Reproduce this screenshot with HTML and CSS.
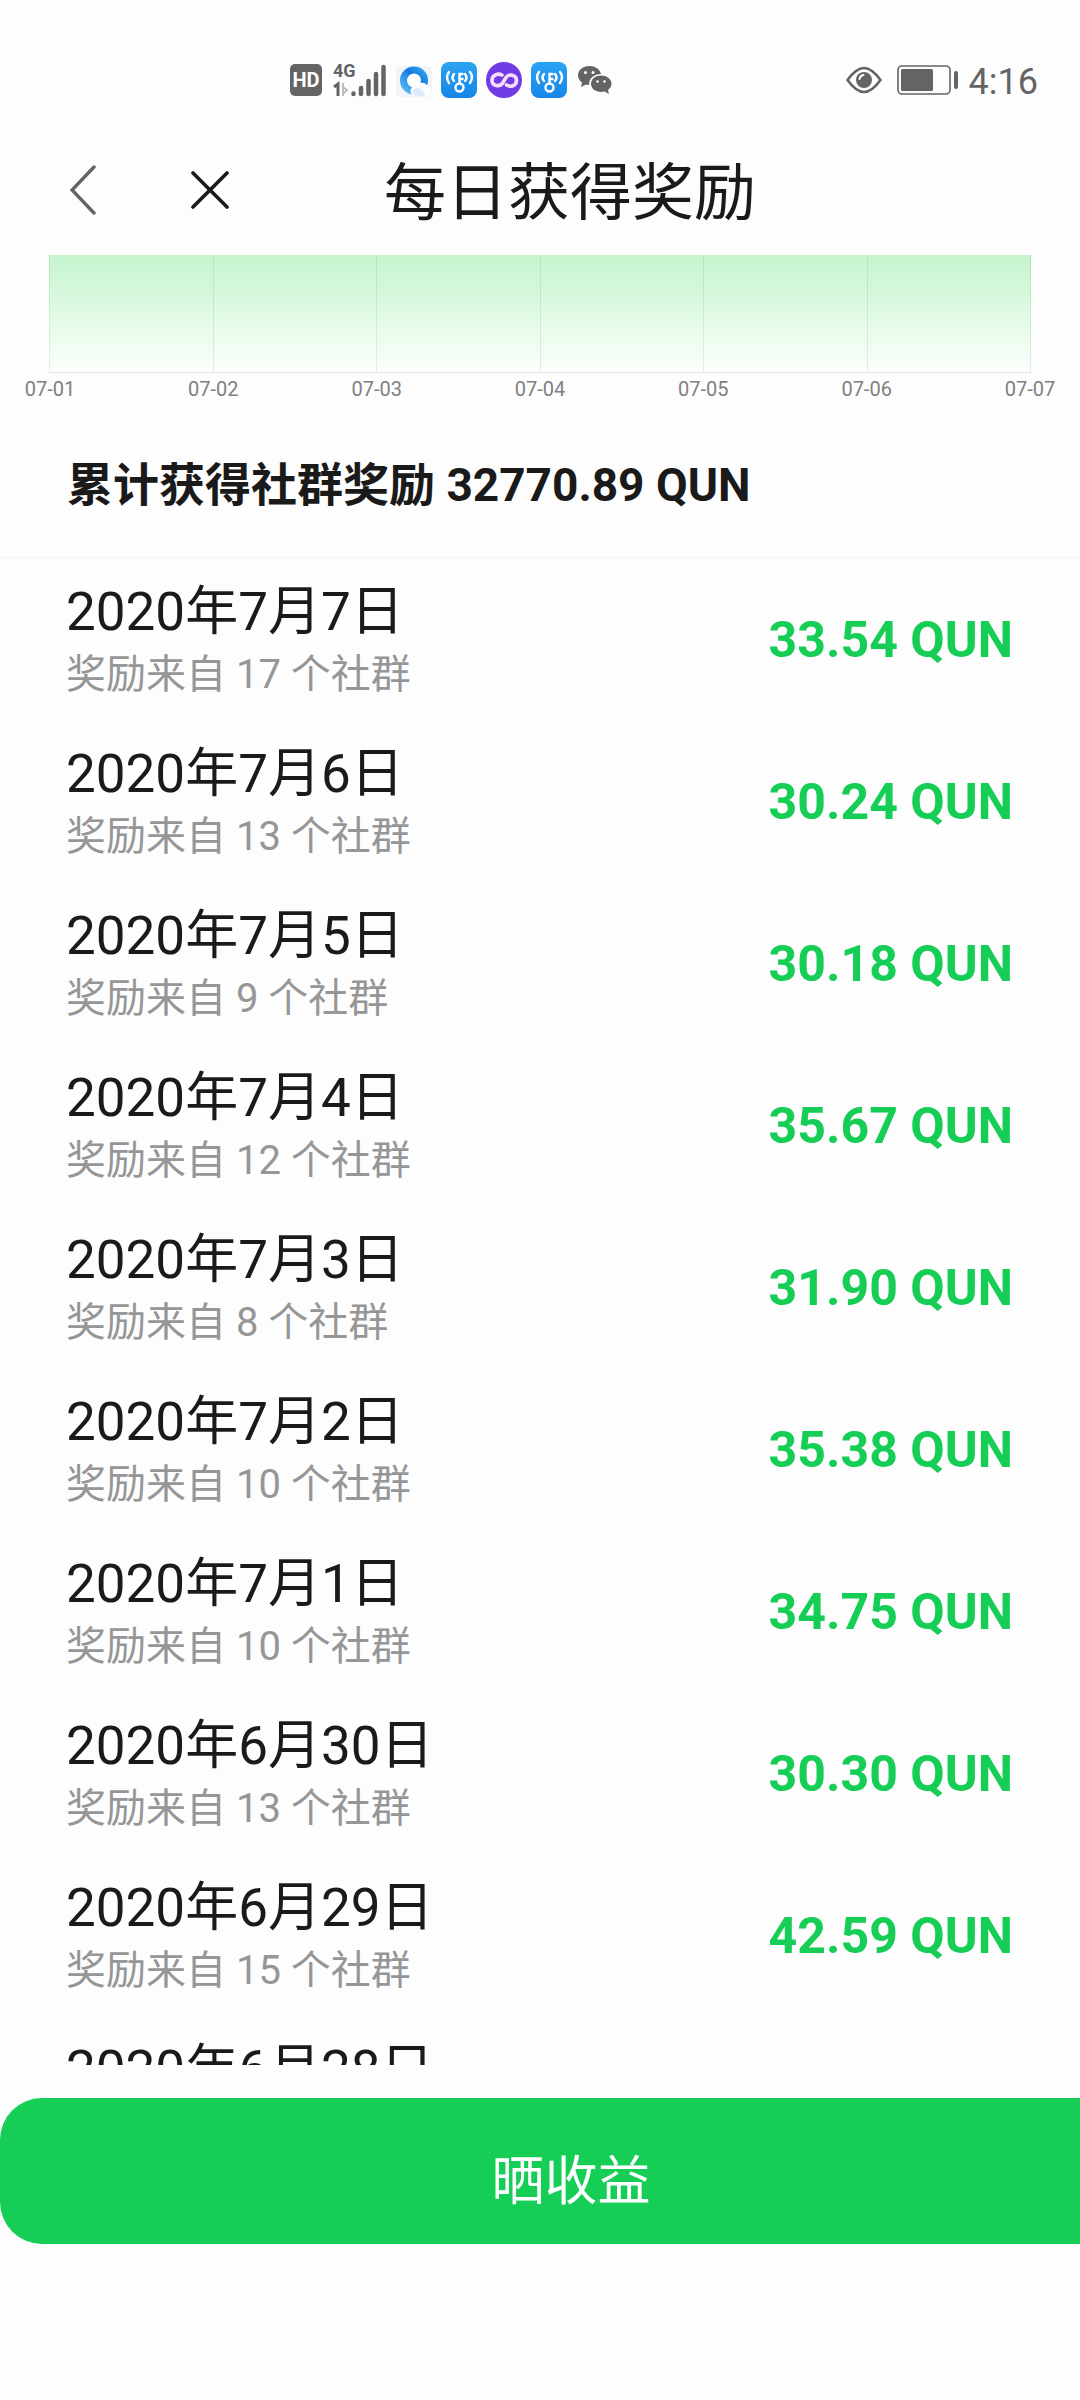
FILE: index.html
```html
<!DOCTYPE html>
<html lang="zh-CN">
<head>
<meta charset="utf-8">
<meta name="viewport" content="width=device-width, initial-scale=1">
<title>每日获得奖励</title>
<link rel="stylesheet" href="styles.css">
</head>
<body>
<div class="app">
  <div class="status">
    <div class="status-left">
      <span class="hd">HD</span>
      <svg class="signal" width="54" height="40" viewBox="0 0 54 40" aria-hidden="true">
        <text class="signal-net" x="0" y="17">4G</text>
        <path d="M1 27 5 24V36" fill="none" stroke="#646464" stroke-width="3"/>
        <path d="M10 23V36M10 27l4 3-4 4" fill="none" stroke="#bdbdbd" stroke-width="2"/>
        <path d="M20.500 33.500v.5M28 28v6M35.500 21v13M43 14v20M50.500 7v27" fill="none" stroke="#646464" stroke-width="4.500" stroke-linecap="round"/>
      </svg>
      <svg class="browser" width="36" height="36" viewBox="0 0 36 36" aria-hidden="true">
        <defs><linearGradient id="ring" x1="0" y1="1" x2="1" y2="0"><stop offset="0" stop-color="#55bdf5"/><stop offset=".6" stop-color="#1677e0"/><stop offset="1" stop-color="#2ba4ee"/></linearGradient></defs>
        <rect y="4" width="36" height="31" rx="5" fill="#f1f4f8"/>
        <circle cx="18" cy="18.500" r="10.500" fill="#fff" stroke="url(#ring)" stroke-width="7"/>
        <path d="M19 34a5 5 0 0 1 1-10 7 7 0 0 1 11-1 6 6 0 0 1 1 11Z" fill="#fff"/>
        <path d="M19 34a4.500 4.500 0 0 1 1-8c5 0 8 3 9 8Z" fill="#dceafa"/>
      </svg>
      <svg class="app-icon" width="36" height="36" viewBox="0 0 36 36" aria-hidden="true">
        <defs>
          <linearGradient id="sky" x1="0" y1="0" x2="0" y2="1"><stop offset="0" stop-color="#2ba3f2"/><stop offset="1" stop-color="#1686e8"/></linearGradient>
          <g id="wifi-key">
            <rect width="36" height="36" rx="8" fill="url(#sky)"/>
            <g fill="none" stroke="#fff" stroke-width="2.400" stroke-linecap="round">
              <path d="M8 10q-4 5 0 11M13 12q-3 4 0 7M29 10q4 5 0 11M24 12q3 4 0 7"/>
              <circle cx="18.500" cy="25.500" r="4"/><path d="M18.500 21V12h3M18.500 17h3"/>
            </g>
          </g>
        </defs>
        <use href="#wifi-key"/>
      </svg>
      <svg class="app-icon" width="36" height="36" viewBox="0 0 36 36" aria-hidden="true">
        <circle cx="18" cy="18" r="18" fill="#6f3be4"/>
        <path d="M16 13c-4-2-10 0-10 5.500s8 7 11 2l3-5c3-4.500 10.500-2.500 10.500 3s-6 7-10 4.500" fill="none" stroke="#fbdcf6" stroke-width="3.600" stroke-linecap="round"/>
      </svg>
      <svg class="app-icon" width="36" height="36" viewBox="0 0 36 36" aria-hidden="true"><use href="#wifi-key"/></svg>
      <svg class="chat" width="34" height="30" viewBox="0 0 34 30" aria-hidden="true">
        <path d="M11.500 1C5 1 0 5 0 10.500c0 3 2 5.500 4 7L3 22l5-2.500c1.500.4 2 .5 3 .5C11 13 16 9 23 9 22 4 17 1 11.500 1Z" fill="#646464"/>
        <path d="M23 10.500c-5.500 0-10 3.500-10 8.300S17.500 27 23 27c1.300 0 2.500-.2 3.600-.5L31 29l-1-4c2-1.500 3.500-3.700 3.500-6.200 0-4.800-5-8.300-10.500-8.300Z" fill="#646464"/>
        <g fill="#fff"><circle cx="7.500" cy="7.500" r="1.500"/><circle cx="15" cy="7.500" r="1.500"/><circle cx="19.500" cy="16.500" r="1.300"/><circle cx="26.500" cy="16.500" r="1.300"/></g>
      </svg>
    </div>
    <div class="status-right">
      <svg class="eye" width="36" height="28" viewBox="0 0 36 28" aria-hidden="true">
        <path d="M1.500 14C8 5 13 2 18 2s10 3 16.500 12C28 23 23 26 18 26S8 23 1.500 14Z" fill="none" stroke="#646464" stroke-width="2.600" stroke-linejoin="round"/>
        <circle cx="18" cy="14" r="8" fill="#646464"/><path d="M13.500 13a5 5 0 0 1 4-4" fill="none" stroke="#fff" stroke-width="2" stroke-linecap="round"/>
      </svg>
      <svg class="battery" width="62" height="30" viewBox="0 0 62 30" aria-hidden="true">
        <rect x="1" y="1" width="52" height="28" rx="4" fill="none" stroke="#646464" stroke-width="1.600"/>
        <rect x="4" y="4" width="32" height="22" rx="1.500" fill="#646464"/><rect x="57" y="6" width="4" height="18" rx="2" fill="#646464"/>
      </svg>
      <time class="clock">4:16</time>
    </div>
  </div>

  <header class="nav">
    <button class="nav-btn" aria-label="返回"><svg width="26" height="50" viewBox="0 0 26 50"><path d="M24 2 2 25l22 23" fill="none" stroke="#646464" stroke-width="3.400" stroke-linecap="round"/></svg></button>
    <button class="nav-btn close" aria-label="关闭"><svg width="38" height="38" viewBox="0 0 38 38"><path d="m2 2 34 34M36 2 2 36" fill="none" stroke="#1a1a1a" stroke-width="3.600" stroke-linecap="round"/></svg></button>
    <h1 class="title">每日获得奖励</h1>
  </header>

  <main class="content">
    <section class="chart">
      <div class="plot"><i></i><i></i><i></i><i></i><i></i><i></i></div>
      <div class="axis"><span>07-01</span><span>07-02</span><span>07-03</span><span>07-04</span><span>07-05</span><span>07-06</span><span>07-07</span></div>
    </section>
    <h2 class="total">累计获得社群奖励 32770.89 QUN</h2>
    <ul class="rewards">
      <li class="row"><div><p class="date">2020年7月7日</p><p class="from">奖励来自 17 个社群</p></div><strong class="amount">33.54 QUN</strong></li>
      <li class="row"><div><p class="date">2020年7月6日</p><p class="from">奖励来自 13 个社群</p></div><strong class="amount">30.24 QUN</strong></li>
      <li class="row"><div><p class="date">2020年7月5日</p><p class="from">奖励来自 9 个社群</p></div><strong class="amount">30.18 QUN</strong></li>
      <li class="row"><div><p class="date">2020年7月4日</p><p class="from">奖励来自 12 个社群</p></div><strong class="amount">35.67 QUN</strong></li>
      <li class="row"><div><p class="date">2020年7月3日</p><p class="from">奖励来自 8 个社群</p></div><strong class="amount">31.90 QUN</strong></li>
      <li class="row"><div><p class="date">2020年7月2日</p><p class="from">奖励来自 10 个社群</p></div><strong class="amount">35.38 QUN</strong></li>
      <li class="row"><div><p class="date">2020年7月1日</p><p class="from">奖励来自 10 个社群</p></div><strong class="amount">34.75 QUN</strong></li>
      <li class="row"><div><p class="date">2020年6月30日</p><p class="from">奖励来自 13 个社群</p></div><strong class="amount">30.30 QUN</strong></li>
      <li class="row"><div><p class="date">2020年6月29日</p><p class="from">奖励来自 15 个社群</p></div><strong class="amount">42.59 QUN</strong></li>
      <li class="row"><div><p class="date">2020年6月28日</p><p class="from"></p></div></li>
    </ul>
  </main>

  <footer class="actions"><button class="share">晒收益</button></footer>
</div>
</body>
</html>
```

FILE: styles.css
```css
* { box-sizing: border-box; margin: 0; padding: 0; }
body {
  background: #fdfdfd;
  color: #1a1a1a;
  font-family: Roboto, "Noto Sans CJK SC", sans-serif;
}
button { border: 0; background: none; font: inherit; color: inherit; cursor: pointer; }
svg { display: block; flex: none; }

.app { display: flex; flex-direction: column; height: 100vh; overflow: hidden; }

.status {
  display: flex;
  flex: none;
  justify-content: space-between;
  height: 124px;
  padding: 35px 42px 0 290px;
  color: #646464;
}
.status-left, .status-right { display: flex; align-items: center; }
.status-left { gap: 9px; }
.hd {
  width: 32px;
  margin-right: 2px;
  border-radius: 5px;
  background: #646464;
  color: #fff;
  font-size: 20px;
  font-weight: 700;
  line-height: 32px;
  text-align: center;
}
.signal-net { fill: #646464; font-family: "Liberation Sans Narrow", Roboto, sans-serif; font-size: 18px; font-weight: 700; }
.chat { margin-left: 2px; }
.status-right { gap: 10px; }
.eye { margin-right: 5px; }
.clock { padding-top: 4px; font-size: 36px; line-height: 40px; }

.nav { display: flex; flex: none; align-items: center; height: 131px; padding: 0 70px; }
.close { margin-left: 95px; }
.title { margin-left: 155px; padding-top: 8px; font-size: 62px; font-weight: 400; line-height: 80px; }

.content { flex: 1; min-height: 0; overflow-y: auto; scrollbar-width: none; }
.plot {
  display: flex;
  height: 118px;
  margin: 0 49px;
  border-left: 1px solid rgba(0, 80, 40, .08);
  border-bottom: 1px solid #dfe6e2;
  background: linear-gradient(#c5f4cd, #e0fae3 50%, #fdfffd);
}
.plot i { flex: 1; border-right: 1px solid rgba(0, 80, 40, .1); }
.axis {
  display: flex;
  justify-content: space-between;
  padding: 3px 23px;
  color: #808080;
  font-size: 20px;
  line-height: 26px;
}
.axis span { width: 54px; text-align: center; white-space: nowrap; }
.total {
  padding: 48px 67px 39px;
  border-bottom: 3px solid #f7f7f7;
  font-size: 46px;
  font-weight: 700;
  line-height: 64px;
}

.rewards { list-style: none; }
.row { display: flex; align-items: center; justify-content: space-between; height: 162px; padding: 0 67px 0 66px; }
.date { font-size: 53px; line-height: 70px; }
.from { min-height: 56px; color: #969696; font-size: 40px; line-height: 56px; }
.amount { color: #16cd56; font-size: 50px; font-weight: 700; }

.actions { flex: none; padding: 33px 0 156px; }
.share {
  width: calc(100% + 62px);
  height: 146px;
  padding-top: 11px;
  border-radius: 42px;
  background: #16cd56;
  color: #fff;
  font-size: 53px;
}
```
